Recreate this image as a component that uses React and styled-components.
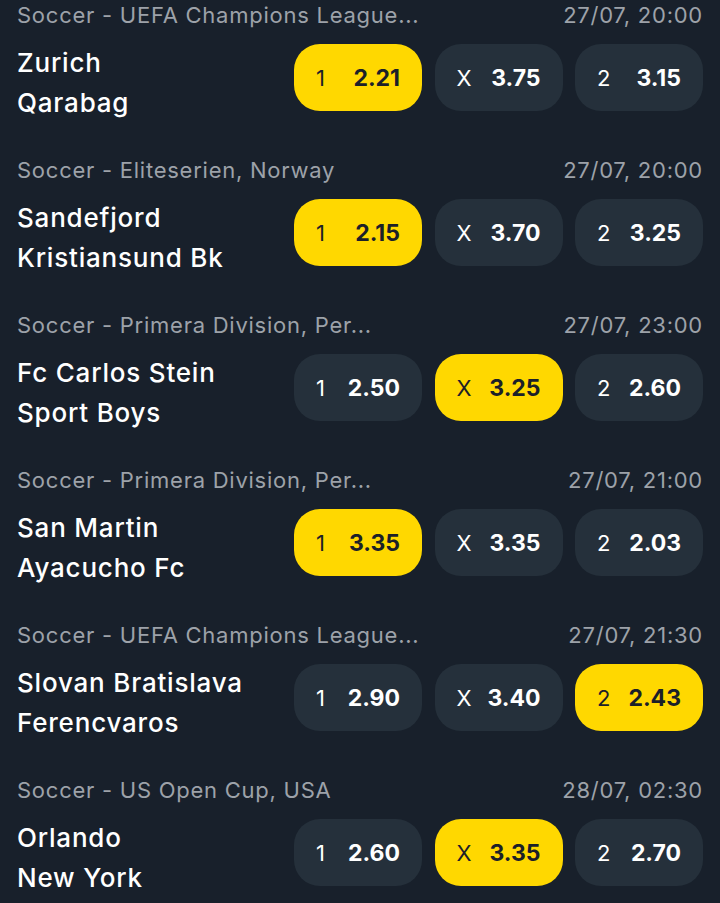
import React from "react";
import styled, { createGlobalStyle } from "styled-components";

const GlobalStyle = createGlobalStyle`
  html, body {
    margin: 0;
    padding: 0;
    background: #18202b;
  }
  body {
    font-family: Inter, "Noto Sans", sans-serif;
    -webkit-font-smoothing: antialiased;
  }
`;

const List = styled.main`
  display: flex;
  flex-direction: column;
  width: 720px;
  height: 903px;
  overflow: hidden;
  background: #18202b;
`;

const Match = styled.section`
  display: flex;
  flex-direction: column;
  padding: 0 17px 32px;
`;

const Header = styled.div`
  display: flex;
  justify-content: space-between;
  align-items: center;
  height: 30px;
  font-size: 22px;
  line-height: 30px;
  letter-spacing: 0.75px;
  color: #9da2a9;
  white-space: nowrap;
`;

const Body = styled.div`
  display: flex;
  justify-content: space-between;
  align-items: flex-start;
  margin-top: 13px;
`;

const Teams = styled.div`
  display: flex;
  flex-direction: column;
  font-size: 26px;
  font-weight: 500;
  line-height: 40px;
  letter-spacing: 0.8px;
  color: #ffffff;
  white-space: nowrap;
`;

const Odds = styled.div`
  display: flex;
  gap: 12.5px;
  margin-top: 1px;
`;

const OddButton = styled.button`
  display: flex;
  align-items: center;
  justify-content: space-between;
  width: 128px;
  height: 67px;
  padding: 0 22px;
  border: none;
  border-radius: 26px;
  font-family: inherit;
  background: ${(p) => (p.$active ? "#ffd800" : "#25303b")};
  color: ${(p) => (p.$active ? "#1b2029" : "#ffffff")};
`;

const Label = styled.span`
  font-size: 22px;
  font-weight: 400;
`;

const Value = styled.span`
  font-size: 23px;
  font-weight: 700;
`;

const matches = [
  {
    league: "Soccer - UEFA Champions League...",
    time: "27/07, 20:00",
    home: "Zurich",
    away: "Qarabag",
    odds: ["2.21", "3.75", "3.15"],
    pick: 0,
  },
  {
    league: "Soccer - Eliteserien, Norway",
    time: "27/07, 20:00",
    home: "Sandefjord",
    away: "Kristiansund Bk",
    odds: ["2.15", "3.70", "3.25"],
    pick: 0,
  },
  {
    league: "Soccer - Primera Division, Per...",
    time: "27/07, 23:00",
    home: "Fc Carlos Stein",
    away: "Sport Boys",
    odds: ["2.50", "3.25", "2.60"],
    pick: 1,
  },
  {
    league: "Soccer - Primera Division, Per...",
    time: "27/07, 21:00",
    home: "San Martin",
    away: "Ayacucho Fc",
    odds: ["3.35", "3.35", "2.03"],
    pick: 0,
  },
  {
    league: "Soccer - UEFA Champions League...",
    time: "27/07, 21:30",
    home: "Slovan Bratislava",
    away: "Ferencvaros",
    odds: ["2.90", "3.40", "2.43"],
    pick: 2,
  },
  {
    league: "Soccer - US Open Cup, USA",
    time: "28/07, 02:30",
    home: "Orlando",
    away: "New York",
    odds: ["2.60", "3.35", "2.70"],
    pick: 1,
  },
];

const labels = ["1", "X", "2"];

export default function App() {
  return (
    <>
      <GlobalStyle />
      <List>
        {matches.map((m, i) => (
          <Match key={i}>
            <Header>
              <span>{m.league}</span>
              <span>{m.time}</span>
            </Header>
            <Body>
              <Teams>
                <span>{m.home}</span>
                <span>{m.away}</span>
              </Teams>
              <Odds>
                {m.odds.map((o, j) => (
                  <OddButton key={j} $active={m.pick === j}>
                    <Label>{labels[j]}</Label>
                    <Value>{o}</Value>
                  </OddButton>
                ))}
              </Odds>
            </Body>
          </Match>
        ))}
      </List>
    </>
  );
}
